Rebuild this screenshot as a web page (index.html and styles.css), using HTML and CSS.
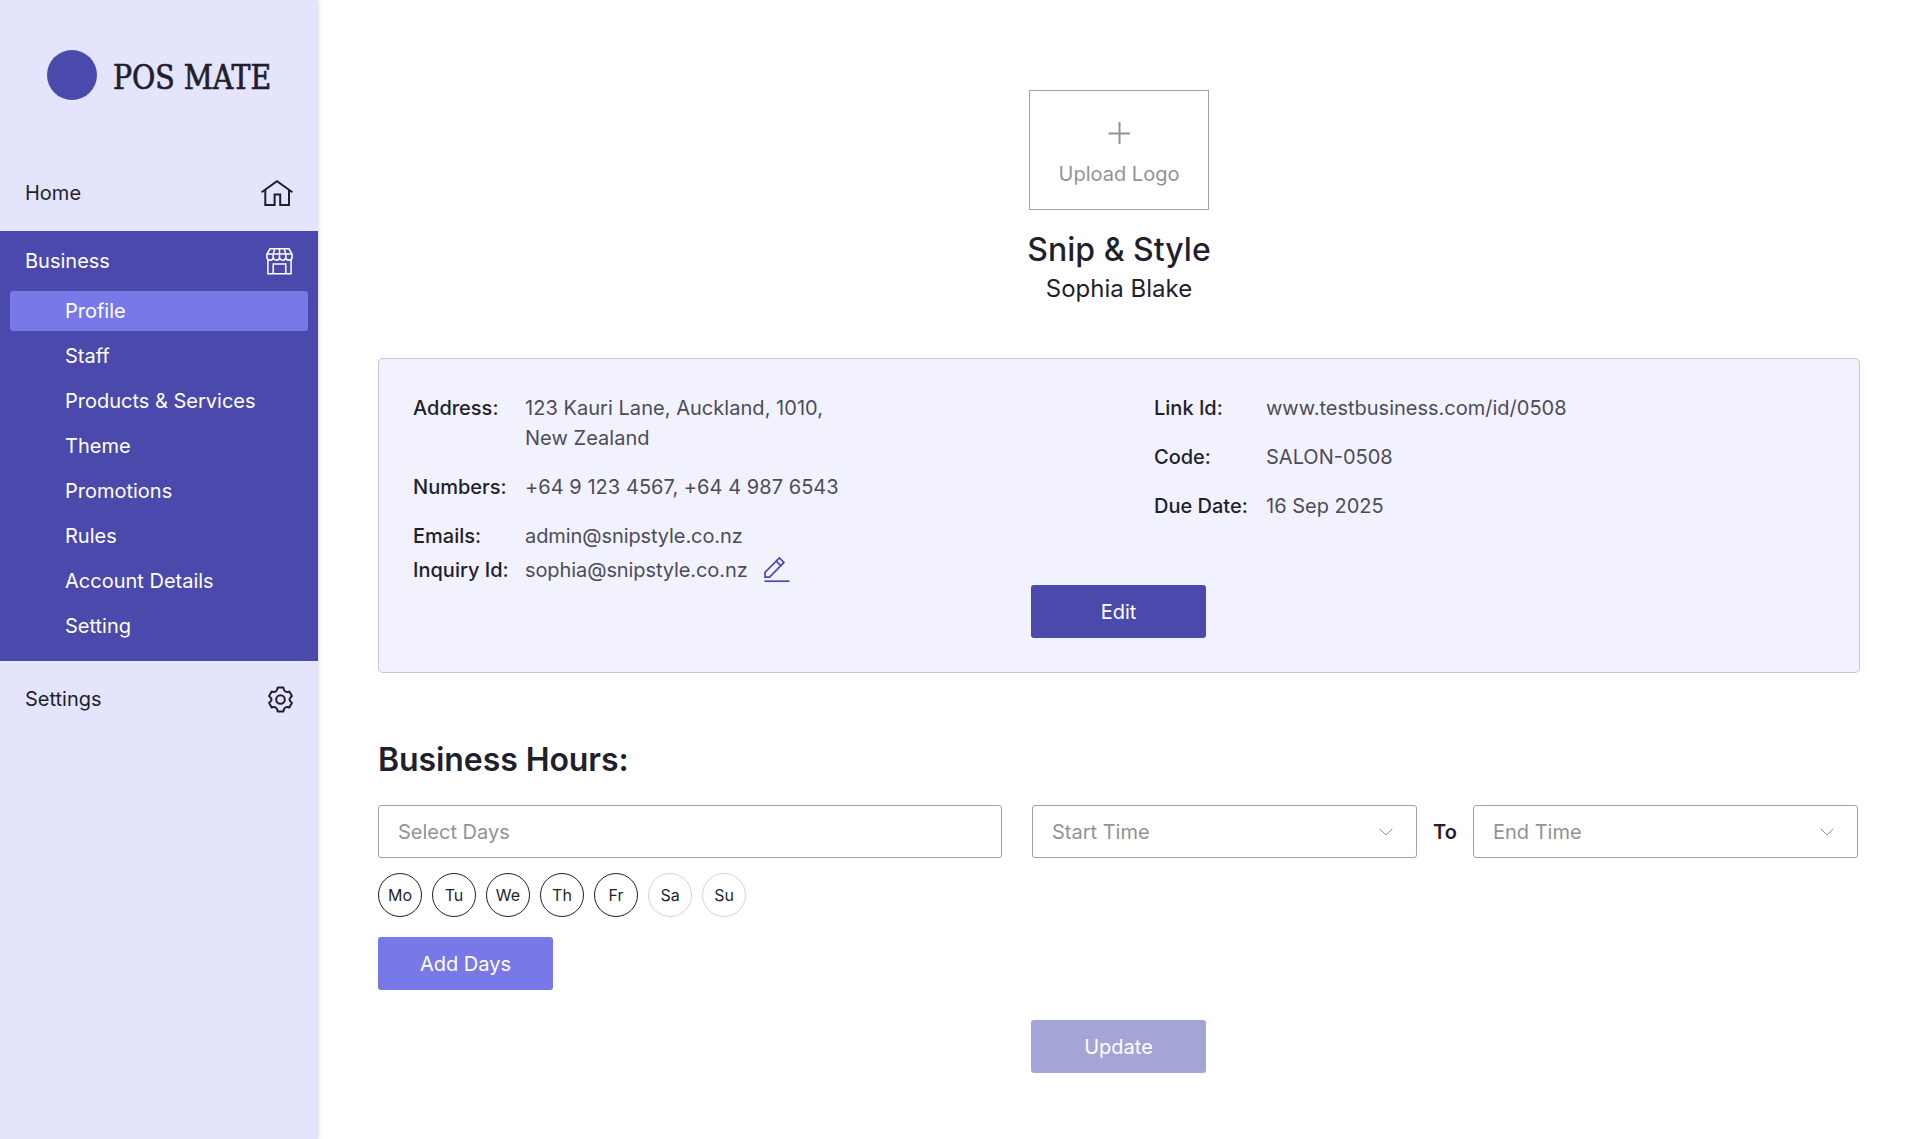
FILE: index.html
```html
<!DOCTYPE html>
<html lang="en">
<head>
<meta charset="utf-8">
<title>POS Mate - Business Profile</title>
<link rel="stylesheet" href="styles.css">
</head>
<body>
<div class="app">
  <aside class="sidebar">
    <div class="brand"><span class="brand-mark"></span><span class="brand-name">POS MATE</span></div>
    <nav class="nav">
      <a class="nav-row nav-home"><span>Home</span>
        <svg width="32" height="27" viewBox="0 0 32 27" fill="none" stroke="currentColor" stroke-width="2"><path d="M.6 12.200 16 1.200l15.400 11"/><path d="M4.300 10V25h9.300V14.500h5.600V25h8.800V10"/></svg>
      </a>
      <div class="nav-group">
        <a class="nav-row"><span>Business</span>
          <svg width="27" height="27" viewBox="0 0 27 27" fill="none" stroke="currentColor" stroke-width="1.500"><path d="M4 .8h19l3.100 5.500v2.700a3.150 3.150 0 0 1-6.300 0 3.150 3.150 0 0 1-6.300 0 3.150 3.150 0 0 1-6.300 0 3.150 3.150 0 0 1-6.300 0V6.300Z"/><path d="M1 6.100h25M8.800.8 7.200 6.100v3M13.500.8v8.300M18.200.8l1.600 5.300v3M1.900 11.500v14.300h23.200V11.500M7.200 25.800V15.900h12.600v9.900"/></svg>
        </a>
        <div class="subnav">
          <a class="subnav-item active">Profile</a>
          <a class="subnav-item">Staff</a>
          <a class="subnav-item">Products &amp; Services</a>
          <a class="subnav-item">Theme</a>
          <a class="subnav-item">Promotions</a>
          <a class="subnav-item">Rules</a>
          <a class="subnav-item">Account Details</a>
          <a class="subnav-item">Setting</a>
        </div>
      </div>
      <a class="nav-row nav-settings"><span>Settings</span>
        <svg width="25" height="27" viewBox="0 0 25 27" fill="none" stroke="currentColor" stroke-width="2" stroke-linejoin="round"><path d="M9.700 1.500h5.600l.8 2.700q1.400 2 3.700 1.700l1.500-.3 2.600 4.500-1.900 2q-.9 1.400 0 2.800l1.900 2-2.600 4.500-1.500-.3q-2.300-.3-3.700 1.700l-.8 2.700H9.700l-.8-2.700q-1.400-2-3.700-1.700l-1.500.3-2.600-4.500 1.900-2q.9-1.400 0-2.800l-1.900-2 2.600-4.500 1.500.3q2.300.3 3.700-1.700Z"/><circle cx="12.500" cy="13.500" r="4.300"/></svg>
      </a>
    </nav>
  </aside>

  <main class="main">
    <header class="profile">
      <div class="upload">
        <svg width="22" height="22" viewBox="0 0 22 22" stroke="currentColor" stroke-width="2"><path d="M11.500 0v22M.500 11.500h22"/></svg>
        <span>Upload Logo</span>
      </div>
      <h1 class="business-name">Snip &amp; Style</h1>
      <p class="owner">Sophia Blake</p>
    </header>

    <section class="card">
      <div class="details">
        <dl class="detail-list">
          <div class="detail"><dt>Address:</dt><dd class="digits">123 Kauri Lane, Auckland, 1010,<br>New Zealand</dd></div>
          <div class="detail"><dt>Numbers:</dt><dd class="digits">+64 9 123 4567, +64 4 987 6543</dd></div>
          <div class="detail"><dt>Emails:</dt><dd class="email">admin@snipstyle.co.nz</dd></div>
          <div class="detail inquiry"><dt>Inquiry Id:</dt><dd class="email">sophia@snipstyle.co.nz</dd>
            <svg class="pencil" width="26" height="26" viewBox="0 0 26 26" fill="none" stroke="currentColor" stroke-width="1.700"><path d="M1 20.200v-4.900L15.400.9l4.500 4.500L5.600 20.200ZM12.200 4.100l4.500 4.500"/><path d="M.5 24.200h25"/></svg>
          </div>
        </dl>
        <dl class="detail-list">
          <div class="detail"><dt>Link Id:</dt><dd>www.testbusiness.com/id/0508</dd></div>
          <div class="detail"><dt>Code:</dt><dd>SALON-0508</dd></div>
          <div class="detail"><dt>Due Date:</dt><dd>16 Sep 2025</dd></div>
        </dl>
      </div>
      <button class="button primary">Edit</button>
    </section>

    <section class="hours">
      <h2 class="hours-title">Business Hours:</h2>
      <div class="fields">
        <div class="field days-field">Select Days</div>
        <div class="field time-field">Start Time<svg width="14" height="8" viewBox="0 0 14 8" fill="none" stroke="currentColor" stroke-width="1"><path d="m.6.7 6.400 6.300L13.400.7"/></svg></div>
        <span class="to">To</span>
        <div class="field time-field">End Time<svg width="14" height="8" viewBox="0 0 14 8" fill="none" stroke="currentColor" stroke-width="1"><path d="m.6.7 6.400 6.300L13.400.7"/></svg></div>
      </div>
      <div class="days">
        <span class="day on">Mo</span><span class="day on">Tu</span><span class="day on">We</span><span class="day on">Th</span><span class="day on">Fr</span><span class="day">Sa</span><span class="day">Su</span>
      </div>
      <button class="button accent">Add Days</button>
      <button class="button disabled">Update</button>
    </section>
  </main>
</div>
</body>
</html>
```
FILE: styles.css
```css
* { box-sizing: border-box; }
body, h1, h2, p, dl, dd { margin: 0; }
body {
  font: 400 20px/30px Inter, "Liberation Sans", sans-serif;
  color: #1f1f2e;
  background: #fff;
}
.app { display: flex; height: 1139px; overflow: hidden; }

.sidebar {
  width: 318px;
  flex: none;
  background: #e4e4fc;
  box-shadow: 0 0 4px rgba(0, 0, 0, .2);
}
.brand {
  display: flex;
  align-items: center;
  gap: 16px;
  height: 150px;
  padding-left: 47px;
}
.brand-mark { width: 50px; height: 50px; border-radius: 50%; background: #4b49ac; }
.brand-name {
  font: 400 33px/50px "DejaVu Serif Condensed", "DejaVu Serif", serif;
  white-space: nowrap;
  transform: scaleX(.955);
  transform-origin: left;
  padding-top: 6px;
  -webkit-text-stroke: .7px currentColor;
}
.nav-row {
  display: flex;
  align-items: center;
  justify-content: space-between;
  height: 60px;
  padding: 0 25px;
}
.nav-home { height: 76px; margin-top: 5px; }
.nav-group { background: #4b49ac; color: #fff; padding-bottom: 15px; }
.subnav { display: flex; flex-direction: column; gap: 5px; padding: 0 10px; }
.subnav-item { height: 40px; padding-left: 55px; line-height: 40px; border-radius: 3px; }
.subnav-item.active { background: #7978e9; }
.nav-settings { height: 76px; }

.main { flex: 1; padding: 90px 60px 0; }
.profile { display: flex; flex-direction: column; align-items: center; height: 268px; }
.upload {
  display: flex;
  flex-direction: column;
  align-items: center;
  width: 180px;
  height: 120px;
  padding-top: 31px;
  border: 1px solid #a1a1aa;
  color: #929299;
}
.upload span { margin-top: 15px; }
.business-name { margin-top: 20px; font-size: 32px; line-height: 40px; font-weight: 500; }
.owner { font-size: 24px; line-height: 38px; }

.card {
  width: 1482px;
  height: 315px;
  padding: 34px 34px 0;
  border: 1px solid #c6c6d9;
  border-radius: 5px;
  background: #f2f2ff;
}
.details { display: grid; grid-template-columns: 1fr 1fr; column-gap: 70px; height: 192px; }
.detail-list { display: flex; flex-direction: column; gap: 19px; }
.detail { display: flex; }
.detail dt { width: 112px; flex: none; font-weight: 500; }
.detail dd { color: #4c4c59; white-space: nowrap; }
.digits { letter-spacing: .04px; }
.email { letter-spacing: -.09px; }
.inquiry { margin-top: -15px; }
.pencil { margin: 2px 0 0 16px; color: #4b49ac; }

.button {
  display: block;
  width: 175px;
  height: 53px;
  padding: 0;
  border: 0;
  border-radius: 3px;
  font: inherit;
  color: #fff;
}
.primary { margin: 0 0 0 618px; background: #4b49ac; }
.accent { margin-top: 20px; background: #7978e9; }
.disabled { margin: 30px 0 0 653px; background: #a5a4d6; }

.hours { padding-top: 67px; width: 1480px; }
.hours-title { font-size: 32px; line-height: 40px; font-weight: 600; letter-spacing: -.08px; }
.fields { display: flex; align-items: center; margin-top: 25px; }
.field {
  display: flex;
  align-items: center;
  justify-content: space-between;
  height: 53px;
  padding: 0 23px 0 19px;
  border: 1px solid #a1a1aa;
  border-radius: 3px;
  color: #929299;
}
.days-field { width: 624px; margin-right: 30px; }
.time-field { width: 385px; }
.to { width: 56px; text-align: center; font-weight: 600; }
.days { display: flex; gap: 10px; margin-top: 15px; }
.day {
  width: 44px;
  height: 44px;
  border: 1px solid #d4d4d8;
  border-radius: 50%;
  font-size: 16px;
  line-height: 43px;
  text-align: center;
}
.day.on { border-color: #1f1f2e; }
```
